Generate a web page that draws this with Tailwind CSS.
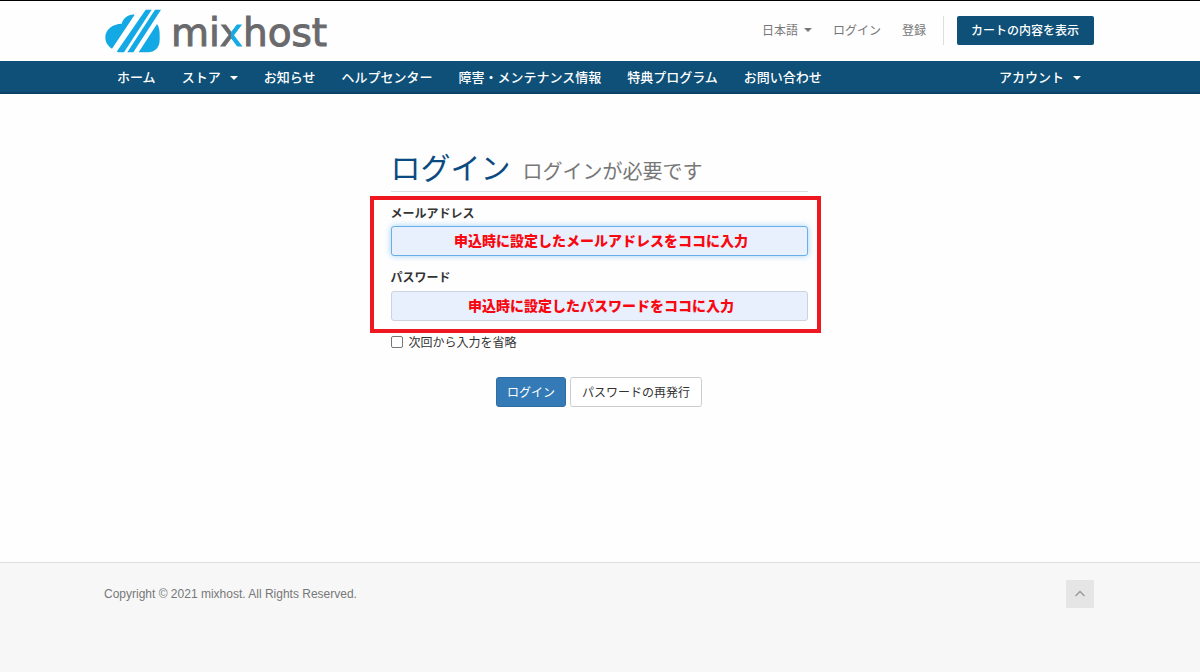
<!DOCTYPE html>
<html lang="ja">
<head>
<meta charset="utf-8">
<meta name="viewport" content="width=device-width, initial-scale=1">
<title>ログイン - mixhost</title>
<script src="https://cdn.jsdelivr.net/npm/@tailwindcss/browser@4"></script>
</head>
<body class="flex min-h-screen flex-col border-t border-black bg-[#fefefe] font-['Noto_Sans_CJK_JP',sans-serif] text-xs text-[#333]">
  <header class="mx-auto flex h-15 w-full max-w-[992px] items-center justify-between pr-0.5">
    <a href="#" class="flex items-center gap-2.5 pl-px">
      <svg class="h-11 w-14" viewBox="30 26 168 132" fill="#13a9e4" aria-hidden="true">
        <path d="M119 43C101 41 86 52 80 70C53 71 31 87 31 111C31 126 39 138 51 145Z"/>
        <path d="M152 28H170L87 156H68L66 153Z"/>
        <path d="M180 28H198L115 156H97Z"/>
        <path d="M186 71C192 79 194 89 194 105V119C194 141 180 156 158 156H131Z"/>
      </svg>
      <span class="pt-1 font-['DejaVu_Sans',sans-serif] text-[39px] leading-11 text-[#6a6a6c] [-webkit-text-stroke:1px_#6a6a6c]">mi<span class="bg-linear-to-r from-[#6a6a6c] from-50% to-[#13a9e4] to-50% bg-clip-text text-transparent [-webkit-text-stroke:1px_transparent]">x</span>host</span>
    </a>
    <div class="flex items-center pb-0.5 text-[#777]">
      <button type="button" class="mr-[21px] flex items-center gap-1.5">日本語<span class="border-x-4 border-t-4 border-x-transparent border-t-[#777]"></span></button>
      <a href="#" class="mr-[21px]">ログイン</a>
      <a href="#" class="mr-[17px]">登録</a>
      <a href="#" class="border-l border-[#ddd] pl-[13px]"><span class="flex h-[29px] items-center rounded-xs bg-[#0e5077] pr-[15px] pl-3.5 font-medium text-white">カートの内容を表示</span></a>
    </div>
  </header>

  <nav class="border-b-2 border-[#0b4266] bg-[#0e5077] text-[13px] font-medium text-white">
    <div class="mx-auto flex h-[31px] w-full max-w-[992px] items-center pr-0.5">
      <a href="#" class="px-[13px]">ホーム</a>
      <button type="button" class="flex items-center gap-[9px] px-[13px]">ストア<span class="mt-1 border-x-4 border-t-4 border-x-transparent border-t-white"></span></button>
      <a href="#" class="px-[13px]">お知らせ</a>
      <a href="#" class="px-[13px]">ヘルプセンター</a>
      <a href="#" class="px-[13px]">障害・メンテナンス情報</a>
      <a href="#" class="px-[13px]">特典プログラム</a>
      <a href="#" class="px-[13px]">お問い合わせ</a>
      <button type="button" class="ml-auto flex items-center gap-[9px] px-[13px]">アカウント<span class="mt-1 border-x-4 border-t-4 border-x-transparent border-t-white"></span></button>
    </div>
  </nav>

  <main class="mx-auto w-full max-w-[992px] flex-1 pt-[52px] pr-0.5">
    <div class="mx-auto w-full max-w-[417px]">
      <h1 class="flex items-baseline gap-3 border-b border-[#ddd] text-[30px] leading-10 text-[#0b4a80]">ログイン<small class="text-xl leading-10 text-[#777]">ログインが必要です</small></h1>
      <form>
        <div class="relative pt-3">
          <label for="email" class="block leading-[18px] font-bold">メールアドレス</label>
          <input id="email" type="text" value="申込時に設定したメールアドレスをココに入力" class="mt-1 block h-[30px] w-full rounded-[3px] border border-[#66afe9] bg-[#e8f0fe] pb-0.5 pl-1 text-center text-sm font-black text-[#f80810] shadow-[0_0_6px_#66afe999] outline-none">
          <label for="password" class="mt-3 block leading-[18px] font-bold">パスワード</label>
          <input id="password" type="text" value="申込時に設定したパスワードをココに入力" class="mt-[5px] block h-[30px] w-full rounded-[3px] border border-[#ccd3de] bg-[#e8f0fe] pb-0.5 pl-1 text-center text-sm font-black text-[#f80810] outline-none">
          <div class="pointer-events-none absolute top-1 -right-[13px] -bottom-3 -left-[21px] border-4 border-[#f01820]"></div>
        </div>
        <label class="mt-3 flex h-[18px] items-center gap-1.5"><input type="checkbox" class="size-3 appearance-none rounded-xs border border-[#777] bg-white">次回から入力を省略</label>
        <div class="mt-[26px] flex justify-center gap-1">
          <button type="submit" class="h-[30px] rounded-[3px] border border-[#2e6da4] bg-[#337ab7] px-[10px] text-white">ログイン</button>
          <button type="button" class="h-[30px] rounded-[3px] border border-[#ccc] bg-white px-[11px]">パスワードの再発行</button>
        </div>
      </form>
    </div>
  </main>

  <footer class="h-[110px] border-t border-[#ddd] bg-[#f7f7f7]">
    <div class="mx-auto flex w-full max-w-[992px] items-center justify-between pt-[17px] pr-0.5 text-[#777]">
      <p class="font-['Liberation_Sans',sans-serif]">Copyright © 2021 mixhost. All Rights Reserved.</p>
      <a href="#" aria-label="ページの先頭へ" class="flex size-7 items-center justify-center bg-[#e5e5e5]">
        <svg class="size-3" viewBox="0 0 12 12" fill="none" stroke="#999" stroke-width="1.4" aria-hidden="true"><path d="M1.5 8L6 3.5L10.5 8"/></svg>
      </a>
    </div>
  </footer>
</body>
</html>
